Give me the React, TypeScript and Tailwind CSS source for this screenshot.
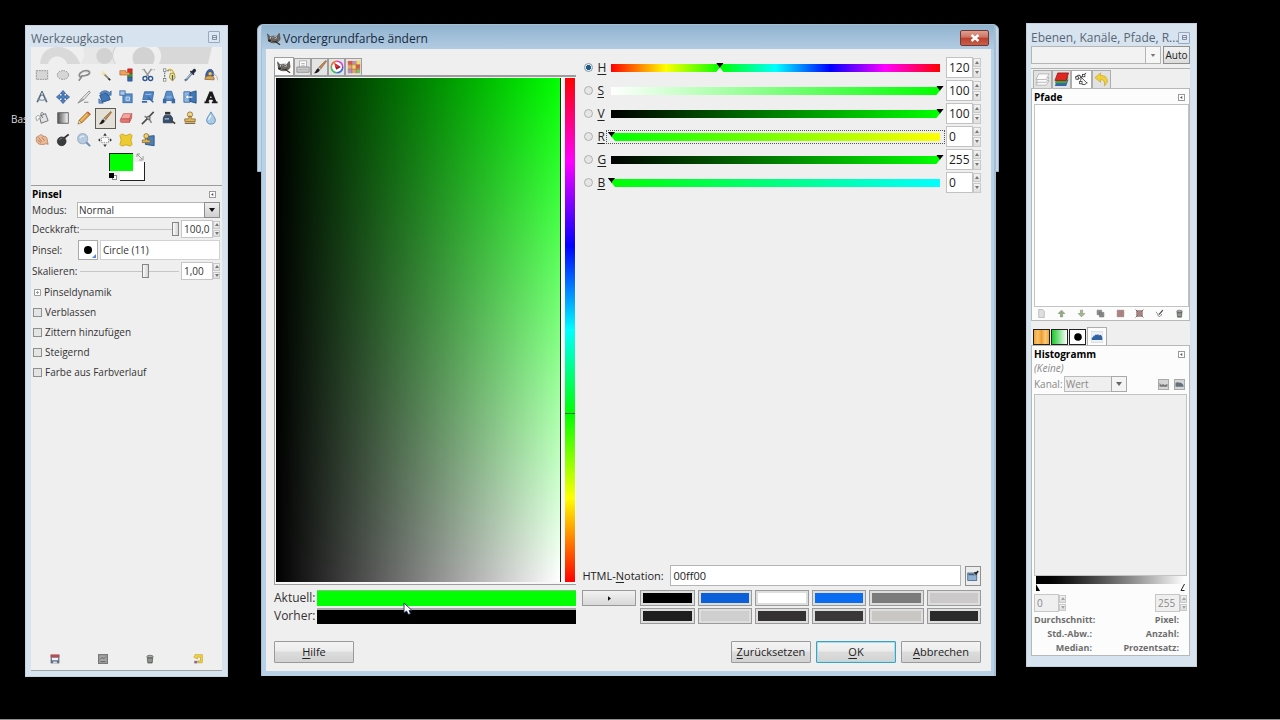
import { ReactNode } from "react";

const GREEN = "#00ff00";

/* ---------- icons ---------- */

function Icon({ children, size = "w-4 h-4" }: { children: ReactNode; size?: string }) {
  return (
    <svg viewBox="0 0 16 16" className={`${size} shrink-0`} fill="none" aria-hidden="true">
      {children}
    </svg>
  );
}

const brush = (
  <>
    <path d="M14.5 0.5 L7 8 L9 10 L15.5 1.5Z" fill="#c98a4b" stroke="#6d4320" strokeWidth=".6" />
    <path d="M7 8 L9 10 L7.8 11.4 L5.6 9.4Z" fill="#c9cdd0" stroke="#666" strokeWidth=".5" />
    <path d="M5.6 9.4 L7.8 11.4 C7 14 4 15.5 1 15 C3 14 3 11 5.6 9.4Z" fill="#1c1c1c" />
  </>
);

const wilber = (
  <>
    <path d="M.5 2 L3.5 5.5 C6 4.5 8.5 4.5 11 5.5 L14 1.5 L15 7.5 C14.5 11.5 10 12.5 7 12.3 C3 12.3 1 10 1.3 7Z" fill="#6b675e" stroke="#3b3833" strokeWidth=".6" />
    <circle cx="5" cy="6.6" r="1.6" fill="#fff" stroke="#222" strokeWidth=".4" />
    <circle cx="9.4" cy="6.4" r="1.8" fill="#fff" stroke="#222" strokeWidth=".4" />
    <circle cx="5.3" cy="6.8" r=".8" fill="#000" />
    <circle cx="9.2" cy="6.6" r=".9" fill="#000" />
    <ellipse cx="2.8" cy="9.8" rx="1.8" ry="1.2" fill="#222" />
    <path d="M6 10.5 C9 11.5 11 11 12 9.5" stroke="#2b2926" strokeWidth=".8" />
    <path d="M9 10.5 L15 14.5" stroke="#332a22" strokeWidth="1.4" />
  </>
);

const trash = (
  <>
    <path d="M3.5 5 L4.5 14.5 H11.5 L12.5 5Z" fill="#777b76" stroke="#4c504b" />
    <ellipse cx="8" cy="4" rx="5" ry="2" fill="#a7aaa5" stroke="#4c504b" />
    <path d="M6.2 8 V12.5 M8 8 V12.5 M9.8 8 V12.5" stroke="#c9cbc7" strokeWidth=".7" />
  </>
);

const tools: { name: string; art: ReactNode }[] = [
  { name: "Rechteckige Auswahl", art: <rect x="1.5" y="3" width="13" height="10" fill="#d6d6d6" stroke="#8a8a8a" strokeDasharray="2 1" /> },
  { name: "Elliptische Auswahl", art: <ellipse cx="8" cy="8" rx="6.5" ry="5" fill="#d6d6d6" stroke="#8a8a8a" strokeDasharray="2 1" /> },
  {
    name: "Freie Auswahl",
    art: (
      <>
        <path d="M4 10.5 C0 8 5 3 10.5 3 C16 3 15.5 7.5 10 8.5 C7 9.5 4 8 5 10.5 L2 14.5" stroke="#8b8b8b" strokeWidth="1.9" />
        <path d="M5 6.5 C7 4.5 10 4 12.5 5" stroke="#d0d0d0" strokeWidth=".8" />
      </>
    ),
  },
  {
    name: "Zauberstab",
    art: (
      <>
        <path d="M7 7 L13 13" stroke="#8a8a72" strokeWidth="2" />
        <path d="M12 12 L14 14" stroke="#333" strokeWidth="2" />
        <path d="M6 3 V9 M3 6 H9 M4 4 L8 8 M8 4 L4 8" stroke="#efe7a0" strokeWidth=".8" />
      </>
    ),
  },
  {
    name: "Nach Farbe auswählen",
    art: (
      <>
        <rect x="10" y="1" width="5" height="5" fill="#e22c20" stroke="#8b1a13" strokeWidth=".6" />
        <rect x="10" y="6" width="5" height="4.5" fill="#3c9a34" stroke="#205b1b" strokeWidth=".6" />
        <rect x="10" y="10.5" width="5" height="4.5" fill="#3566ad" stroke="#1d3f74" strokeWidth=".6" />
        <path d="M1 3 H8 V5 H12 V8 H6 L1 8Z" fill="#efa35f" stroke="#9e5d25" strokeWidth=".7" />
      </>
    ),
  },
  {
    name: "Magnetische Schere",
    art: (
      <>
        <path d="M3 1 L9 10 M12 1 L6 10" stroke="#999" strokeWidth="1.7" />
        <path d="M1 2 H4 M11 2 H16" stroke="#999" strokeDasharray="1 1" />
        <circle cx="4.6" cy="12" r="2.3" fill="#fff" stroke="#2d5590" strokeWidth="1.6" />
        <circle cx="11" cy="12" r="2.3" fill="#fff" stroke="#2d5590" strokeWidth="1.6" />
      </>
    ),
  },
  {
    name: "Vordergrundauswahl",
    art: (
      <>
        <path d="M3 2 V14 M3 3 H10" stroke="#777" strokeWidth="1.4" strokeDasharray="2 1" />
        <rect x="1.5" y="12" width="3" height="3" fill="#fff" stroke="#666" strokeWidth=".7" />
        <rect x="1.5" y="1" width="3" height="3" fill="#fff" stroke="#666" strokeWidth=".7" />
        <path d="M7 2 C11 1 13 3 13 6" stroke="#d9ba2b" strokeWidth="1.6" />
        <path d="M9.5 6 H14 L15 11 L12 15 L8.5 11Z" fill="#f4e27b" stroke="#8e7718" strokeWidth=".8" />
        <path d="M12 8 V13.5" stroke="#345c96" strokeWidth="1.4" />
      </>
    ),
  },
  {
    name: "Farbpipette",
    art: (
      <>
        <path d="M14 1 C16 3 14 5 12 6 L10 4 C11 2 12 0 14 1Z" fill="#1f2c3c" />
        <path d="M8.5 3.5 L12.5 7.5" stroke="#1f2c3c" strokeWidth="2" />
        <path d="M10 6 L4 13 L2 14.5" stroke="#5d7992" strokeWidth="2.4" />
        <path d="M9.5 6.5 L4 12.5" stroke="#d8e6f0" />
      </>
    ),
  },
  {
    name: "Maßband",
    art: (
      <>
        <path d="M2 12 C1 6 4 1.5 7 1.5 C10 1.5 11.5 5 11 9Z" fill="#3c5fa6" stroke="#24365e" strokeWidth=".6" />
        <circle cx="7" cy="6.5" r="2" fill="#f5c33d" />
        <path d="M1 13 C1 9 5 8.5 8 9 C11 9 12 11 11.5 13.5Z" fill="#d8a458" stroke="#765222" strokeWidth=".7" />
        <path d="M10 7 C14 7 15.5 11 15.5 14" stroke="#aaa" />
      </>
    ),
  },
  {
    name: "Zirkel",
    art: (
      <>
        <path d="M8 1 V4 M7 4 L2.5 14 M9 4 L13.5 14" stroke="#55697d" strokeWidth="1.9" />
        <path d="M3 10 C6 12 10 12 13 10" stroke="#7b8fa3" strokeWidth="1.3" />
        <circle cx="8" cy="4.5" r="1.7" fill="#c8d3dc" stroke="#4b5e70" strokeWidth=".8" />
      </>
    ),
  },
  {
    name: "Verschieben",
    art: (
      <path d="M8 0.5 L11 4 H9.2 V6.8 H12 V5 L15.5 8 L12 11 V9.2 H9.2 V12 H11 L8 15.5 L5 12 H6.8 V9.2 H4 V11 L0.5 8 L4 5 V6.8 H6.8 V4 H5Z" fill="#4f84c4" stroke="#28548b" strokeWidth=".8" />
    ),
  },
  {
    name: "Zuschneiden",
    art: (
      <>
        <path d="M14 1 L5 10 L8 11 L15 3Z" fill="#e3e3e3" stroke="#777" strokeWidth=".8" />
        <path d="M5 10 L1 15 L8 11" fill="#bbb" stroke="#777" strokeWidth=".8" />
        <path d="M8 14 H13" stroke="#777" />
      </>
    ),
  },
  {
    name: "Drehen",
    art: (
      <>
        <path d="M2 6 L11 3 L14 11 L5 14Z" fill="#3f77b8" stroke="#244d83" />
        <path d="M2 4 C5 0 10 0 13 3 L15 1 V6 H10 L11 4.5 C8 3 6 3 4 5Z" fill="#5b8fca" stroke="#244d83" strokeWidth=".7" />
        <path d="M1 10 V15 H6Z" fill="#73a2d6" stroke="#244d83" strokeWidth=".7" />
      </>
    ),
  },
  {
    name: "Skalieren",
    art: (
      <>
        <rect x="4.5" y="4.5" width="10.5" height="10" fill="#5b8fca" stroke="#3a6aa5" />
        <rect x="1" y="1" width="6" height="5" fill="#a9c8e8" stroke="#3a6aa5" />
        <path d="M8 8 H12 V12 H8Z" fill="#7ba8d8" stroke="#dbe8f5" strokeWidth=".8" />
      </>
    ),
  },
  {
    name: "Scheren",
    art: (
      <>
        <path d="M4 2 H14.5 L13 11 H2Z" fill="#4f84c4" stroke="#3a6aa5" />
        <path d="M8 8 L14 14 M1 13.5 H7" stroke="#3a6aa5" strokeWidth="2" />
        <path d="M5 5 H12" stroke="#a9c8e8" />
      </>
    ),
  },
  {
    name: "Perspektive",
    art: (
      <>
        <path d="M5 1.5 H11 L14 12 H2Z" fill="#5b8fca" stroke="#3a6aa5" />
        <path d="M1 10 H5 V15 H1Z M11 10 H15 V15 H11Z" fill="#3a6aa5" />
        <path d="M5 8 H11" stroke="#a9c8e8" />
      </>
    ),
  },
  {
    name: "Spiegeln",
    art: (
      <>
        <path d="M1 2 H8 V14 H1Z" fill="#8fb7e0" stroke="#3a6aa5" />
        <path d="M15 1 L8 3 V13 L15 15Z" fill="#3f77b8" stroke="#244d83" />
        <path d="M2.5 8 L6 5 V7 H11 V9 H6 V11Z" fill="#fff" stroke="#3a6aa5" strokeWidth=".6" />
      </>
    ),
  },
  {
    name: "Text",
    art: (
      <>
        <path d="M8 2 L3 14 M7.8 2 L12.6 14" stroke="#1b1b1b" strokeWidth="3.4" />
        <path d="M4.5 10 H11 M.5 14 H6 M9 14 H15.5" stroke="#1b1b1b" strokeWidth="2" />
      </>
    ),
  },
  {
    name: "Füllen",
    art: (
      <>
        <path d="M5 6 L12 3 L15 11 L7 14Z" fill="#dfe2e4" stroke="#666" />
        <path d="M9 8 C5 3 7 0 10 3" stroke="#666" />
        <path d="M5 6 C2 4 0 7 2 11 C4 11 3 8 7 7" fill="#fff" stroke="#777" strokeWidth=".8" />
      </>
    ),
  },
  {
    name: "Farbverlauf",
    art: (
      <>
        <defs>
          <linearGradient id="toolGrad">
            <stop offset="0" stopColor="#555" />
            <stop offset="1" stopColor="#fff" />
          </linearGradient>
        </defs>
        <rect x="2" y="2" width="12" height="12" fill="url(#toolGrad)" stroke="#555" />
      </>
    ),
  },
  {
    name: "Stift",
    art: (
      <>
        <path d="M12 1 L15 4 L5.5 13.5 L2.5 10.5Z" fill="#e5a33a" stroke="#7e4c12" strokeWidth=".8" />
        <path d="M2.5 10.5 L5.5 13.5 L1 15Z" fill="#f2d9b0" stroke="#7e4c12" strokeWidth=".6" />
        <path d="M12 1 L15 4" stroke="#c64b3a" strokeWidth="1.4" />
        <path d="M11.5 3.5 L4 11.5" stroke="#fbdc92" />
      </>
    ),
  },
  { name: "Pinsel", art: brush },
  {
    name: "Radierer",
    art: (
      <>
        <path d="M5 3 H14.5 L12 9 H2Z" fill="#f3a5a0" stroke="#bd5550" strokeWidth=".8" />
        <path d="M2 9 H12 V13 H3 C1 13 1 11 2 9Z M12 9 L14.5 3 V8 L12 13Z" fill="#e07772" stroke="#bd5550" strokeWidth=".8" />
      </>
    ),
  },
  {
    name: "Sprühpistole",
    art: (
      <>
        <path d="M14.5 1 L5 11 L1 15" stroke="#4c4c4c" strokeWidth="1.8" />
        <path d="M4 6 L9 8.5 L12 13.5" stroke="#888" strokeWidth="1.8" />
        <circle cx="8.5" cy="8" r="2" fill="#aaa" stroke="#444" strokeWidth=".8" />
      </>
    ),
  },
  {
    name: "Tinte",
    art: (
      <>
        <rect x="3.5" y="1" width="6" height="3" fill="#333" />
        <path d="M3 5 H10 L12 8 V13.5 H1.5 V8Z" fill="#35506e" stroke="#1b2c40" strokeWidth=".8" />
        <path d="M3 9 H8" stroke="#9db7d1" strokeWidth="1.6" />
        <path d="M9 9.5 L15 14.5" stroke="#444" strokeWidth="2" />
      </>
    ),
  },
  {
    name: "Klonen",
    art: (
      <>
        <circle cx="8" cy="4" r="3" fill="#efd48a" stroke="#7c5d1d" strokeWidth=".8" />
        <path d="M7 6 H9 L9.5 9 H14 V12 H2 V9 H6.5Z" fill="#dfb65a" stroke="#7c5d1d" strokeWidth=".8" />
        <path d="M2 14 H14" stroke="#7c5d1d" strokeWidth="1.5" />
      </>
    ),
  },
  {
    name: "Weichzeichnen",
    art: (
      <>
        <path d="M8 1 C10 5 13 7.5 13 10.5 C13 13.5 11 15 8 15 C5 15 3 13.5 3 10.5 C3 7.5 6 5 8 1Z" fill="#a9cbe8" stroke="#5d8ab5" />
        <path d="M5.5 10 C5.5 8 7 7 8 5" stroke="#fff" strokeWidth="1.3" />
      </>
    ),
  },
  {
    name: "Verschmieren",
    art: (
      <>
        <path d="M1.5 6 C2 3 4 4 5 3 C7 1 9 2 9 4 C12 3 14 5 14 8 L15 13 C12 11 11 14 7 13 C3 13 1 10 1.5 6Z" fill="#ebbc9a" stroke="#a0643c" strokeWidth=".7" />
        <path d="M4 5 L8 10 M3 8 L7 11 M8 5 L11 9" stroke="#a0643c" strokeWidth=".8" />
      </>
    ),
  },
  {
    name: "Abwedeln",
    art: (
      <>
        <circle cx="6.5" cy="9.5" r="5" fill="#3b3d3c" stroke="#1d1e1e" strokeWidth=".7" />
        <path d="M9 6 L14.5 1.5" stroke="#333" strokeWidth="2" />
        <path d="M4 8 C4.5 6.5 6 6 7 6.5" stroke="#898c8b" />
      </>
    ),
  },
  {
    name: "Vergrößerung",
    art: (
      <>
        <circle cx="6.5" cy="6.5" r="5.8" fill="#b4cbe2" stroke="#a2b2c2" strokeWidth="1.2" />
        <path d="M10.5 10.5 L15 15" stroke="#7291b1" strokeWidth="2.4" />
        <path d="M3.5 6 C4 4 6 3 8 4" stroke="#eef5fb" strokeWidth="1.2" />
      </>
    ),
  },
  {
    name: "Ausrichten",
    art: (
      <>
        <rect x="4" y="5" width="8" height="6" fill="#fafafa" stroke="#777" strokeDasharray="1 1" />
        <path d="M8 0 L10 3 H6Z M8 16 L10 13 H6Z M0 8 L2.5 6 V10Z M16 8 L13.5 6 V10Z" fill="#333" />
      </>
    ),
  },
  {
    name: "Heilen",
    art: (
      <path d="M3 1 L8 3 L13 1 L15 3 L13.5 8 L15 13 L13 15 L8 13.5 L3 15 L1 13 L2.5 8 L1 3Z" fill="#eccb31" stroke="#c9a51c" strokeLinejoin="round" />
    ),
  },
  {
    name: "Perspektivisches Klonen",
    art: (
      <>
        <path d="M6 4 L15 3 V14.5 L5 13Z" fill="#4b80bd" stroke="#244d83" />
        <circle cx="6" cy="3.5" r="2.8" fill="#f0cf74" stroke="#7c5d1d" strokeWidth=".8" />
        <path d="M5 6 H7 V8 H10.5 V11 H1.5 V8 H5Z" fill="#dfb65a" stroke="#7c5d1d" strokeWidth=".8" />
      </>
    ),
  },
];

/* ---------- small shared parts ---------- */

function Spin({ small = false, dim = false }: { small?: boolean; dim?: boolean }) {
  const btn = `flex-1 w-full flex items-center justify-center border border-[#c9c9c9] bg-linear-to-b from-[#f3f3f3] to-[#dedede] ${dim ? "text-[#a5a5a5]" : "text-[#777]"}`;
  return (
    <span className={`flex flex-col gap-px shrink-0 ${small ? "w-[7px] h-4" : "w-2 h-5"}`}>
      <button aria-label="Erhöhen" className={btn}>
        <svg viewBox="0 0 4 3" className="w-1 h-[3px]"><path d="M0 3 L2 0 L4 3Z" fill="currentColor" /></svg>
      </button>
      <button aria-label="Verringern" className={btn}>
        <svg viewBox="0 0 4 3" className="w-1 h-[3px]"><path d="M0 0 L2 3 L4 0Z" fill="currentColor" /></svg>
      </button>
    </span>
  );
}

function MenuButton() {
  return (
    <button aria-label="Reitermenü" className="w-[7px] h-[7px] border border-[#9a9a9a] bg-white flex items-center justify-center">
      <svg viewBox="0 0 4 4" className="w-[3px] h-[3px]"><path d="M3 0 L0 2 L3 4Z" fill="#555" /></svg>
    </button>
  );
}

function CloseDock() {
  return (
    <button aria-label="Schließen" className="w-3 h-3 shrink-0 border border-[#98a7c4] rounded-[1px] bg-[#dce7f2] flex items-center justify-center">
      <svg viewBox="0 0 5 5" className="w-[5px] h-[5px]"><path d="M.5 .5 H4.5 V4.5 H.5Z M.5 2.5 H4.5" stroke="#6d7788" strokeWidth=".8" fill="none" /></svg>
    </button>
  );
}

const toolSlider =
  "appearance-none flex-1 min-w-0 h-3.5 bg-[linear-gradient(#c6c6c6,#c6c6c6)] bg-[length:100%_1px] bg-center bg-no-repeat [&::-webkit-slider-thumb]:appearance-none [&::-webkit-slider-thumb]:w-[7px] [&::-webkit-slider-thumb]:h-3.5 [&::-webkit-slider-thumb]:border [&::-webkit-slider-thumb]:border-[#858585] [&::-webkit-slider-thumb]:bg-[linear-gradient(to_right,#fafafa,#d4d4d4)]";

/* ---------- toolbox ---------- */

function Toolbox() {
  return (
    <section className="w-[203px] shrink-0 mt-[25px] mb-[42px] flex flex-col bg-[#d7e4ef] px-[5px] pb-[5px] border border-[#c6d3df] text-[10px] text-[#333]">
      <header className="h-[21px] flex items-end justify-between pr-0.5">
        <h2 className="text-[12px] leading-4 text-[#586675]">Werkzeugkasten</h2>
        <div className="mb-1"><CloseDock /></div>
      </header>
      <div className="flex-1 flex flex-col bg-[#f0efef]">
        <svg viewBox="0 0 190 17" preserveAspectRatio="none" className="w-full h-[17px]" aria-hidden="true">
          <path d="M9 17 C10 4 18 0 27 0 C38 0 46 8 49 17 H36 C33 7 19 7 17 17Z" fill="#d9d9d9" />
          <path d="M51 0 H84 C80 6 80 11 83 17 H49 C54 11 54 6 51 0Z" fill="#e7e7e7" />
          <circle cx="73" cy="9" r="8" fill="#d2d2d2" />
          <path d="M84 0 C80 6 80 11 84 17" stroke="#cfcfcf" fill="none" />
          <circle cx="112" cy="11" r="11" fill="#d2d2d2" />
          <path d="M126 0 H180 L176 17 H127 C131 11 130 5 126 0Z" fill="#d8d8d8" />
        </svg>
        <div className="grid grid-cols-9 grid-rows-4 h-[87px]">
          {tools.map((t) => (
            <button
              key={t.name}
              aria-label={t.name}
              className={`flex items-center justify-center ${t.name === "Pinsel" ? "border border-[#5f5c52] bg-[#e3e0d8]" : ""}`}
            >
              <Icon size="w-3.5 h-3.5">{t.art}</Icon>
            </button>
          ))}
        </div>
        <div className="h-[34px] flex justify-center pt-0.5">
          <button aria-label="Vordergrund- und Hintergrundfarbe" className="w-9 h-7">
            <svg viewBox="0 0 36 28" className="w-9 h-7" shapeRendering="crispEdges">
              <rect x="11" y="9" width="25" height="19" fill="#222" />
              <rect x="11" y="8" width="24" height="19" fill="#fff" />
              <rect x="0" y="0" width="24" height="18" fill="#222" />
              <rect x="1" y="1" width="23" height="17" fill={GREEN} />
              <rect x="24" y="0" width="12" height="9" fill="#f0efef" />
              <rect x="0" y="18" width="11" height="10" fill="#f0efef" />
              <rect x="3" y="22" width="4" height="4" fill="#fff" stroke="#888" />
              <rect x="0" y="20" width="5" height="5" fill="#000" />
              <path d="M28 4 L28 1 L31 1 M28 1 L33 6 M34 3 V7 H30" stroke="#999" fill="none" shapeRendering="auto" />
            </svg>
          </button>
        </div>
        <div className="h-px bg-[#9c9c9c]" />

        <div className="pl-px pr-0.5 flex flex-col">
          <div className="h-4 flex items-center justify-between pr-1">
            <h3 className="font-bold text-black">Pinsel</h3>
            <MenuButton />
          </div>
          <div className="h-4 flex items-center">
            <label htmlFor="mode" className="w-[45px]">Modus:</label>
            <div className="relative flex-1 h-4">
              <select id="mode" className="appearance-none w-full h-4 bg-white border border-[#b5b5b5] px-px text-[10px] leading-3 text-[#333]">
                <option>Normal</option>
              </select>
              <span className="pointer-events-none absolute right-0 top-0 w-4 h-4 border border-[#8d8d8d] bg-linear-to-b from-[#efefef] to-[#cfcfcf] flex items-center justify-center">
                <svg viewBox="0 0 6 4" className="w-1.5 h-1"><path d="M0 0 H6 L3 4Z" fill="#111" /></svg>
              </span>
            </div>
          </div>
          <div className="h-[22px] flex items-center gap-0.5">
            <label htmlFor="opacity" className="w-[46px]">Deckkraft:</label>
            <input id="opacity" type="range" min={0} max={100} defaultValue={100} className={toolSlider} />
            <div className="flex items-center">
              <input aria-label="Deckkraft Wert" defaultValue="100,0" className="w-8 h-[18px] border border-[#c6c6c6] bg-white px-0.5 text-[10px]" />
              <Spin small />
            </div>
          </div>
          <div className="h-5 flex items-center">
            <label htmlFor="brush" className="w-[46px]">Pinsel:</label>
            <button aria-label="Pinselauswahl" className="w-5 h-5 border border-[#a9a9a9] bg-white flex items-center justify-center">
              <svg viewBox="0 0 18 18" className="w-[18px] h-[18px]">
                <circle cx="9" cy="9" r="4" fill="#000" />
                <path d="M17 13 V17 H13Z" fill="#5b83d6" />
              </svg>
            </button>
            <input id="brush" defaultValue="Circle (11)" className="ml-0.5 flex-1 min-w-0 h-5 border border-[#d2d2d2] bg-white px-0.5 text-[10px]" />
          </div>
          <div className="h-[22px] flex items-center gap-0.5">
            <label htmlFor="scale" className="w-[46px]">Skalieren:</label>
            <input id="scale" type="range" min={0} max={100} defaultValue={67} className={toolSlider} />
            <div className="flex items-center">
              <input aria-label="Skalieren Wert" defaultValue="1,00" className="w-8 h-[18px] border border-[#c6c6c6] bg-white px-0.5 text-[10px]" />
              <Spin small />
            </div>
          </div>
          <button className="h-5 flex items-center gap-[3px] pl-0.5">
            <svg viewBox="0 0 7 7" className="w-[7px] h-[7px]"><path d="M.5 .5 H6.5 V6.5 H.5Z M2 3.5 H5 M3.5 2 V5" stroke="#9c9c9c" fill="#fff" /></svg>
            Pinseldynamik
          </button>
          {["Verblassen", "Zittern hinzufügen", "Steigernd", "Farbe aus Farbverlauf"].map((o) => (
            <label key={o} className="h-5 flex items-center gap-[3px] pl-px">
              <input type="checkbox" className="appearance-none w-[9px] h-[9px] border border-[#8e8f8f] bg-[#e4e4e4]" />
              {o}
            </label>
          ))}
        </div>

        <div className="flex-1" />
        <div className="h-[22px] grid grid-cols-4 items-center justify-items-center">
          <button aria-label="Werkzeugeinstellungen speichern">
            <Icon size="w-2.5 h-2.5">
              <rect x="1" y="1" width="14" height="14" fill="#5f6f86" />
              <rect x="1" y="1" width="14" height="4" fill="#c64649" />
              <rect x="3" y="6" width="10" height="4" fill="#f0f3f6" />
              <rect x="5" y="12" width="6" height="3" fill="#e0e0e0" />
            </Icon>
          </button>
          <button aria-label="Werkzeugeinstellungen laden">
            <Icon size="w-2.5 h-2.5">
              <rect x="1" y="1" width="14" height="14" fill="#a5a5a5" stroke="#7a7a7a" strokeWidth="2" />
              <path d="M3 9 L7 5 L9 8 L13 4 M4 12 H12" stroke="#666" strokeWidth="1.5" />
            </Icon>
          </button>
          <button aria-label="Werkzeugeinstellungen löschen"><Icon size="w-2.5 h-2.5">{trash}</Icon></button>
          <button aria-label="Zurücksetzen">
            <Icon size="w-2.5 h-2.5">
              <path d="M3 1 H15 V14 H8 V11 H12 V5 H7 V8 L1 5 L3 3Z" fill="#f1d444" stroke="#c2a01c" />
              <rect x="2" y="11" width="5" height="4" fill="#8a6a7c" />
            </Icon>
          </button>
        </div>
        <div className="h-px bg-[#a5a5a5]" />
      </div>
    </section>
  );
}

/* ---------- colour dialog ---------- */

const channels = [
  { key: "H", value: "120", pos: 33, bar: "bg-[linear-gradient(to_right,#f00,#ff0,#0f0,#0ff,#00f,#f0f,#f00)]" },
  { key: "S", value: "100", pos: 100, bar: "bg-[linear-gradient(to_right,#fff,#0f0)]" },
  { key: "V", value: "100", pos: 100, bar: "bg-[linear-gradient(to_right,#000,#0f0)]" },
  { key: "R", value: "0", pos: 0, bar: "bg-[linear-gradient(to_right,#0f0,#ff0)]" },
  { key: "G", value: "255", pos: 100, bar: "bg-[linear-gradient(to_right,#000,#0f0)]" },
  { key: "B", value: "0", pos: 0, bar: "bg-[linear-gradient(to_right,#0f0,#0ff)]" },
];

const channelSlider =
  "appearance-none flex-1 min-w-0 h-3 bg-[length:calc(100%-8px)_8px] bg-center bg-no-repeat [&::-webkit-slider-thumb]:appearance-none [&::-webkit-slider-thumb]:w-2 [&::-webkit-slider-thumb]:h-2.5 [&::-webkit-slider-thumb]:bg-[linear-gradient(#000_50%,#f0f0f0_50%)] [&::-webkit-slider-thumb]:[clip-path:polygon(0_0,100%_0,50%_50%,100%_100%,0_100%,50%_50%)]";

const history = [
  "#000000", "#0b5fd8", "#ffffff", "#0a6cf0", "#7b7b7b", "#cbc9c9",
  "#1e1e1e", "#d0cfcf", "#333132", "#393737", "#c9c7c3", "#2a2a2a",
];

const dialogButton =
  "h-[22px] w-20 border border-[#9a9a9a] rounded-[1px] bg-[linear-gradient(#f4f4f4,#ececec_45%,#dcdcdc_50%,#d2d2d2)] text-[11px] leading-4 text-[#222]";

function ColorDialog() {
  return (
    <section className="relative flex-1 min-w-0 mt-6 mb-[43px]">
      {/* edges of the window lying underneath */}
      <div className="absolute -left-1 -right-[3px] top-0 h-[148px] rounded-t-md border border-[#9fb2c5] bg-[#c4d8ea]" />
      <div className="relative h-full flex flex-col rounded-t-sm bg-[#b9d1e7] border-l border-r-2 border-t border-[#a5bed4] pl-1 pr-[3px] pb-[5px]">
        <header className="-ml-1 -mr-[3px] pl-[5px] pr-[5px] h-6 flex items-center justify-between bg-linear-to-b from-[#91b3cf] to-[#b2cbe2]">
          <h1 className="flex items-center gap-0.5 text-[12px] leading-4 text-[#15293d] pt-1">
            <Icon size="w-3.5 h-3.5">{wilber}</Icon>
            Vordergrundfarbe ändern
          </h1>
          <button aria-label="Schließen" className="mt-0.5 w-[29px] h-4 border border-[#6e3a35] rounded-[2px] bg-[linear-gradient(#dea091,#cf7161_45%,#b8402c_50%,#c9604b)] flex items-center justify-center">
            <svg viewBox="0 0 10 8" className="w-2.5 h-2"><path d="M1.5 1 L8.5 7 M8.5 1 L1.5 7" stroke="#fff" strokeWidth="2.4" /></svg>
          </button>
        </header>

        <div className="flex-1 flex flex-col bg-[#f0efef] pl-2 pr-[10px] pt-2 pb-2">
          <div className="flex-1 grid grid-cols-[302fr_398fr] gap-1.5">
            {/* picker */}
            <div className="flex flex-col min-w-0">
              <div className="flex items-end h-[18px]">
                {[
                  { name: "GIMP", art: wilber },
                  {
                    name: "CMYK",
                    art: (
                      <>
                        <path d="M4 1 H12 V8 H4Z" fill="#fff" stroke="#aaa" />
                        <path d="M1 8 H15 V14 H1Z" fill="#c9c9c9" stroke="#8d8d8d" />
                        <path d="M3 11 H13 M6 4 H10 M6 6 H10" stroke="#aaa" />
                      </>
                    ),
                  },
                  { name: "Wasserfarben", art: brush },
                  {
                    name: "Farbrad",
                    art: (
                      <>
                        <path d="M8 1.5 A6.5 6.5 0 0 1 14.5 8" stroke="#d83fd2" strokeWidth="2" />
                        <path d="M14.5 8 A6.5 6.5 0 0 1 8 14.5" stroke="#3c6be0" strokeWidth="2" />
                        <path d="M8 14.5 A6.5 6.5 0 0 1 1.5 8" stroke="#3bbf63" strokeWidth="2" />
                        <path d="M1.5 8 A6.5 6.5 0 0 1 8 1.5" stroke="#e6703a" strokeWidth="2" />
                        <circle cx="8" cy="8" r="5.4" fill="#fff" />
                        <path d="M5 3.5 L12.5 8 L7 11Z" fill="#8c1a26" />
                        <path d="M5 3.5 L10.5 7 L6.4 9Z" fill="#ee2c2c" />
                      </>
                    ),
                  },
                  {
                    name: "Palette",
                    art: (
                      <>
                        <rect x="1" y="1" width="14" height="14" fill="#e5a46a" />
                        <path d="M1 1 H6 V5 H1Z M10 5 H15 V10 H10Z" fill="#d85a4a" />
                        <path d="M6 1 H10 V5 H6Z M1 10 H6 V15 H1Z" fill="#b98cc0" />
                        <path d="M10 1 H15 V5 H10Z M6 5 H10 V10 H6Z" fill="#f2da6b" />
                        <path d="M10 10 H15 V15 H10Z" fill="#8dbb62" />
                        <path d="M1 5.5 H15 M1 10.5 H15 M5.5 1 V15 M10.5 1 V15" stroke="#9c6c52" strokeWidth=".6" />
                      </>
                    ),
                  },
                ].map((t, i) => (
                  <button
                    key={t.name}
                    aria-label={t.name}
                    className={`flex items-center justify-center border border-b-0 border-[#9d9d9d] ${i === 0 ? "w-5 h-[18px] bg-[#fbfbfb]" : "w-[17px] h-[17px] bg-[#e4e4e4]"}`}
                  >
                    <Icon size="w-3.5 h-3.5">{t.art}</Icon>
                  </button>
                ))}
              </div>
              <div className="flex-1 flex gap-1 border border-[#9d9d9d] border-t-2 border-r-0 p-px pb-0.5 bg-[#f7f7f7]">
                <div className="flex-1 border-r border-[#222] bg-[linear-gradient(to_right,#000,transparent),linear-gradient(to_top,#fff,#0f0)]" />
                <div className="w-2.5 flex flex-col bg-[linear-gradient(to_top,#f00,#ff0,#0f0,#0ff,#00f,#f0f,#f00)]">
                  <div className="h-2/3 border-b border-[#0a7a0a]" />
                </div>
              </div>
              <div className="mt-[5px] flex flex-col gap-0.5 text-[12px] leading-4 text-[#333]">
                <div className="flex h-4">
                  <span className="w-[43px]">Aktuell:</span>
                  <div className="flex-1 bg-[#00ff00] border-t border-[#7cc47c]" />
                </div>
                <div className="flex h-4">
                  <span className="w-[43px]">Vorher:</span>
                  <div className="flex-1 bg-black border-t-2 border-[#a8a8a8]" />
                </div>
              </div>
            </div>

            {/* channels */}
            <div className="flex flex-col min-w-0 text-[12px] leading-4 text-[#222]">
              <div className="flex flex-col gap-0.5">
                {channels.map((c) => (
                  <div key={c.key} className="h-[21px] flex items-center">
                    <label className="w-6 flex items-center gap-1 pl-0.5">
                      <input
                        type="radio"
                        name="channel"
                        defaultChecked={c.key === "H"}
                        className="appearance-none w-[9px] h-[9px] rounded-full border border-[#b0b0b0] bg-[#e6e6e6] checked:border-[#8d9aa6] checked:bg-[radial-gradient(#1e5a86_45%,#e8eef2_55%)]"
                      />
                      <span className="underline underline-offset-2">{c.key}</span>
                    </label>
                    <div className={`flex-1 min-w-0 flex border border-dotted ${c.key === "R" ? "border-[#555]" : "border-transparent"}`}>
                      <input type="range" aria-label={c.key} min={0} max={100} defaultValue={c.pos} className={`${channelSlider} ${c.bar}`} />
                    </div>
                    <input aria-label={`${c.key} Wert`} defaultValue={c.value} className="ml-px w-[27px] h-[21px] border border-[#c2c2c2] bg-white px-0.5 text-[12px]" />
                    <Spin />
                  </div>
                ))}
              </div>
              <div className="flex-1" />
              <div className="flex items-center h-[21px]">
                <label htmlFor="html" className="w-[88px] whitespace-nowrap text-[11px]">HTML-<u className="underline-offset-2">N</u>otation:</label>
                <input id="html" defaultValue="00ff00" className="flex-1 min-w-0 h-[21px] border border-[#b5b5b5] bg-white px-0.5 text-[11px]" />
                <button aria-label="Farbe aufnehmen" className="ml-1 w-4 h-5 border border-[#8f8f8f] bg-[#ececec] flex items-center justify-center">
                  <Icon size="w-3 h-3">
                    <rect x="1" y="4" width="12" height="10" fill="#8fb1d4" stroke="#3f5d7e" />
                    <path d="M2 6 H12" stroke="#3f5d7e" strokeWidth="2" />
                    <path d="M8.5 8 L12 4.5" stroke="#8b959e" strokeWidth="2" />
                    <path d="M15 1.5 L11.5 5 M10 3 L13 6" stroke="#222" strokeWidth="2.2" />
                  </Icon>
                </button>
              </div>
              <div className="mt-1 flex gap-1">
                <button aria-label="Farbe zur Chronik hinzufügen" className="w-[54px] h-4 border border-[#9a9a9a] bg-linear-to-b from-[#f2f2f2] to-[#d8d8d8] flex items-center justify-center">
                  <svg viewBox="0 0 4 6" className="w-[3px] h-[5px]"><path d="M0 0 L4 3 L0 6Z" fill="#111" /></svg>
                </button>
                <div className="flex-1 grid grid-cols-6 gap-x-[3px] gap-y-0.5">
                  {history.map((h, i) => (
                    <button key={i} aria-label={h} className="h-4 border border-[#9a9a9a] bg-[#dedede] p-0.5 flex">
                      <span className="flex-1 h-full" style={{ background: h }} />
                    </button>
                  ))}
                </div>
              </div>
            </div>
          </div>

          <div className="mt-[17px] flex gap-[5px]">
            <button className={dialogButton}><u className="underline-offset-2">H</u>ilfe</button>
            <div className="flex-1" />
            <button className={dialogButton}><u className="underline-offset-2">Z</u>urücksetzen</button>
            <button className={`${dialogButton} border-[#3fa3bd]! shadow-[inset_0_0_0_1px_#a9dbe8]`}><u className="underline-offset-2">O</u>K</button>
            <button className={dialogButton}><u className="underline-offset-2">A</u>bbrechen</button>
          </div>
        </div>
      </div>
    </section>
  );
}

/* ---------- layers / paths dock ---------- */

const pathActions: { name: string; art: ReactNode }[] = [
  { name: "Neuer Pfad", art: <path d="M3 1 H10 L13 4 V15 H3Z" fill="#dedede" stroke="#a0a0a0" /> },
  { name: "Pfad anheben", art: <path d="M8 2 L14 8 H10 V14 H6 V8 H2Z" fill="#94ab86" stroke="#7d8f71" /> },
  { name: "Pfad absenken", art: <path d="M8 14 L14 8 H10 V2 H6 V8 H2Z" fill="#a7b796" stroke="#7d8f71" /> },
  { name: "Pfad duplizieren", art: <path d="M2 2 H10 V10 H2Z M6 6 H14 V14 H6Z" fill="#8a8a8a" stroke="#6f6f6f" /> },
  { name: "Auswahl aus Pfad", art: <rect x="2" y="2" width="12" height="12" fill="#a98383" stroke="#8c7070" strokeDasharray="2 1" /> },
  { name: "Pfad aus Auswahl", art: <><rect x="3" y="3" width="10" height="10" fill="#a98383" stroke="#8c7070" /><path d="M1 1 L5 5 M11 11 L15 15 M15 1 L11 5 M5 11 L1 15" stroke="#666" strokeWidth="1.6" /></> },
  { name: "Am Pfad nachziehen", art: <><path d="M14 2 L7 10" stroke="#555" strokeWidth="2.4" /><path d="M2 5 C2 8 6 7 5 10 C5 14 10 15 12 9" stroke="#777" strokeWidth="1.6" /></> },
  { name: "Pfad löschen", art: trash },
];

const dockTabs: { name: string; art: ReactNode }[] = [
  {
    name: "Ebenen",
    art: (
      <>
        <path d="M4 9 H15 L12 14 H1Z" fill="#fafafa" stroke="#aaa" strokeWidth=".8" />
        <path d="M4 6 H15 L12 11 H1Z" fill="#fafafa" stroke="#aaa" strokeWidth=".8" />
        <path d="M4 2 H15 L12 8 H1Z" fill="#fafafa" stroke="#aaa" strokeWidth=".8" />
      </>
    ),
  },
  {
    name: "Kanäle",
    art: (
      <>
        <path d="M3 8 H15.5 L13 15 H1Z" fill="#3566ad" />
        <path d="M3 5 H15.5 L13 12 H1Z" fill="#46a03c" />
        <path d="M4 1 H15.5 L13 9 H1Z" fill="#e02622" stroke="#8e1512" strokeWidth=".8" />
      </>
    ),
  },
  {
    name: "Pfade",
    art: (
      <>
        <path d="M1 6 C6 1 9 4 7 9 C6 14 12 15 14 11 M13 1 C9 4 7 7 3 8 M5 3 L14 12" stroke="#444" strokeWidth="1" />
        <rect x="2" y="5" width="2.6" height="2.6" fill="#fff" stroke="#333" strokeWidth=".8" />
        <rect x="6" y="10" width="2.6" height="2.6" fill="#fff" stroke="#333" strokeWidth=".8" />
        <rect x="9" y="2.5" width="2.6" height="2.6" fill="#fff" stroke="#333" strokeWidth=".8" />
      </>
    ),
  },
  {
    name: "Journal",
    art: <path d="M7 1 V4 C12 3 15 7 14 11 L11 15 C12 10 10 8 7 8 V11 L1 6Z" fill="#f0cf3a" stroke="#c9aa2c" strokeWidth=".8" />,
  },
];

function Dock() {
  return (
    <section className="w-[171px] shrink-0 mt-[23px] mb-[52px] flex flex-col bg-[#d7e3ee] border border-[#c3d0dd] pl-1 pr-1.5 pb-2.5 text-[10px] text-[#333]">
      <header className="h-[22px] flex items-center justify-between pt-[5px]">
        <h2 className="whitespace-nowrap w-[146px] text-[12px] leading-4 text-[#586675]">Ebenen, Kanäle, Pfade, R...</h2>
        <CloseDock />
      </header>
      <div className="flex-1 flex flex-col bg-[#f0efef]">
        <div className="h-[18px] flex gap-0.5">
          <div className="relative flex-1">
            <select aria-label="Bild" className="appearance-none w-full h-[18px] border border-[#b5b5b5] bg-[#f2f2f2]" />
            <span className="pointer-events-none absolute right-0 top-0 w-4 h-[18px] border border-[#b5b5b5] bg-[#f6f6f6] flex items-center justify-center">
              <svg viewBox="0 0 6 4" className="w-1.5 h-[3px]"><path d="M0 0 H6 L3 4Z" fill="#777" /></svg>
            </span>
          </div>
          <button className="w-[27px] h-[18px] border border-[#8f8f8f] bg-linear-to-b from-[#f2f2f2] to-[#dcdcdc] text-[10px] leading-4 text-[#222]">Auto</button>
        </div>
        <div className="mt-1 h-0.5 border-t border-[#b0b0b0]" />

        <div className="flex items-end h-[18px] pl-0.5">
          {dockTabs.map((t) => (
            <button
              key={t.name}
              aria-label={t.name}
              className={`border border-b-0 border-[#adadad] flex items-center justify-center h-[18px] ${t.name === "Pfade" ? "w-[21px] bg-white" : "w-[19px] bg-[#e2e2e2]"}`}
            >
              <Icon size="w-[15px] h-[15px]">{t.art}</Icon>
            </button>
          ))}
        </div>
        <div className="border border-[#b8b8b8] bg-[#fcfcfc] flex-[233] flex flex-col">
          <div className="h-[15px] flex items-center justify-between pl-0.5 pr-1 pt-0.5">
            <h3 className="font-bold text-black">Pfade</h3>
            <MenuButton />
          </div>
          <div className="flex-1 mx-0.5 mr-0 border border-[#c3c3c3] bg-white" />
          <div className="h-[13px] grid grid-cols-8 items-center justify-items-center">
            {pathActions.map((a) => (
              <button key={a.name} aria-label={a.name}><Icon size="w-[9px] h-[9px]">{a.art}</Icon></button>
            ))}
          </div>
        </div>

        <div className="mt-1.5 flex items-end h-[18px] pl-0.5 gap-px">
          <button aria-label="Muster" className="w-[17px] h-4 border border-[#222] bg-[linear-gradient(to_right,#f2a33c,#f8c36a,#ee9d35,#f9cb78,#f0a541)]" />
          <button aria-label="Farbverläufe" className="w-[17px] h-4 border border-[#222] bg-[linear-gradient(to_right,#19c82b,#fff)]" />
          <button aria-label="Pinsel" className="w-[17px] h-4 border border-[#222] bg-white flex items-center justify-center">
            <svg viewBox="0 0 8 8" className="w-2 h-2"><circle cx="4" cy="4" r="3.8" fill="#000" /></svg>
          </button>
          <button aria-label="Histogramm" className="w-5 h-[18px] border border-b-0 border-[#adadad] bg-[#fcfcfc] flex items-center justify-center">
            <Icon size="w-3 h-3">
              <rect x="0" y="1" width="16" height="14" fill="#eef3f8" stroke="#c7d2dd" />
              <path d="M1 12 V9 L3 8 V6 L5 7 V5 L8 5 L10 4 V6 L13 5 L15 8 V12Z" fill="#2f62a3" />
            </Icon>
          </button>
        </div>
        <div className="border border-[#b8b8b8] bg-[#fcfcfc] flex-[311] flex flex-col px-0.5">
          <div className="h-4 flex items-center justify-between pr-0.5">
            <h3 className="font-bold text-black">Histogramm</h3>
            <MenuButton />
          </div>
          <p className="italic leading-3 text-[#888]">(Keine)</p>
          <div className="h-5 flex items-center text-[#888]">
            <label htmlFor="channel-select" className="w-[30px]">Kanal:</label>
            <div className="relative w-[63px] h-4">
              <select id="channel-select" className="appearance-none w-full h-4 border border-[#bdbdbd] bg-[#f0efef] px-px text-[10px] leading-3 text-[#888]">
                <option>Wert</option>
              </select>
              <span className="pointer-events-none absolute right-0 top-0 w-4 h-4 border border-[#a9a9a9] bg-[#f4f4f4] flex items-center justify-center">
                <svg viewBox="0 0 6 4" className="w-1.5 h-1"><path d="M0 0 H6 L3 4Z" fill="#666" /></svg>
              </span>
            </div>
            <div className="flex-1" />
            <button aria-label="Linear" className="w-[11px] h-[11px] border border-[#a9a9a9] bg-[#d5d5d5] flex">
              <Icon size="w-[9px] h-[9px]"><path d="M1 12 V5 L4 9 L7 7 L10 9 L15 7 V12Z" fill="#777" /></Icon>
            </button>
            <button aria-label="Logarithmisch" className="ml-[5px] mr-0.5 w-[11px] h-[11px] border border-[#a9a9a9] bg-[#d5d5d5] flex">
              <Icon size="w-[9px] h-[9px]"><path d="M1 12 V5 L5 4 L8 5 L11 5 L15 9 V12Z" fill="#63707e" /></Icon>
            </button>
          </div>
          <div className="flex-1 border border-[#c3c3c3] bg-[#f0efef]" />
          <div className="mx-0.5 h-2 bg-linear-to-r from-black to-white" />
          <div className="h-[9px] flex justify-between px-0.5">
            <svg viewBox="0 0 5 7" className="w-[5px] h-[7px]"><path d="M0 0 V7 H4Z" fill="#000" /></svg>
            <svg viewBox="0 0 5 7" className="w-[5px] h-[7px]"><path d="M4.5 0 L1 6.5 H4.5" stroke="#222" fill="#fff" /></svg>
          </div>
          <div className="flex justify-between items-center text-[#888] h-5">
            <div className="flex items-center">
              <input aria-label="Untergrenze" defaultValue="0" disabled className="w-[25px] h-[18px] border border-[#c6c6c6] bg-[#f0efef] px-0.5 text-[10px]" />
              <Spin small dim />
            </div>
            <div className="flex items-center">
              <input aria-label="Obergrenze" defaultValue="255" disabled className="w-[25px] h-[18px] border border-[#c6c6c6] bg-[#f0efef] px-0.5 text-[10px]" />
              <Spin small dim />
            </div>
          </div>
          <table className="w-full table-fixed text-right font-bold text-[9px] leading-[14px] text-[#6e6e6e]">
            <tbody>
              {[["Durchschnitt:", "Pixel:"], ["Std.-Abw.:", "Anzahl:"], ["Median:", "Prozentsatz:"]].map(([a, b]) => (
                <tr key={a}>
                  <th scope="row" className="w-[58px] p-0 font-bold whitespace-nowrap text-right">{a}</th>
                  <th scope="row" className="p-0 pr-2 font-bold whitespace-nowrap text-right">{b}</th>
                </tr>
              ))}
            </tbody>
          </table>
        </div>
      </div>
    </section>
  );
}

export default function App() {
  return (
    <main className="relative h-screen min-h-[640px] bg-black border-b border-[#8f8f8f] flex pl-[25px] pr-[83px] font-['Open_Sans','Noto_Sans',sans-serif]">
      <Toolbox />
      <div className="w-[33px] shrink-0" />
      <ColorDialog />
      <div className="w-[30px] shrink-0" />
      <Dock />

      {/* desktop icon caption behind the toolbox edge */}
      <span className="absolute left-[11px] top-[112px] text-[10px] leading-[14px] text-[#d9d9d9]">Bas</span>

      {/* mouse pointer */}
      <svg viewBox="0 0 10 14" className="absolute left-[403px] top-[602px] w-2.5 h-3.5" aria-hidden="true">
        <path d="M1 1 V11 L3.5 9 L5.5 12.5 L7.5 11.5 L6 8.5 H9Z" fill="#fff" stroke="#1d2a5c" strokeWidth=".9" />
      </svg>
    </main>
  );
}
